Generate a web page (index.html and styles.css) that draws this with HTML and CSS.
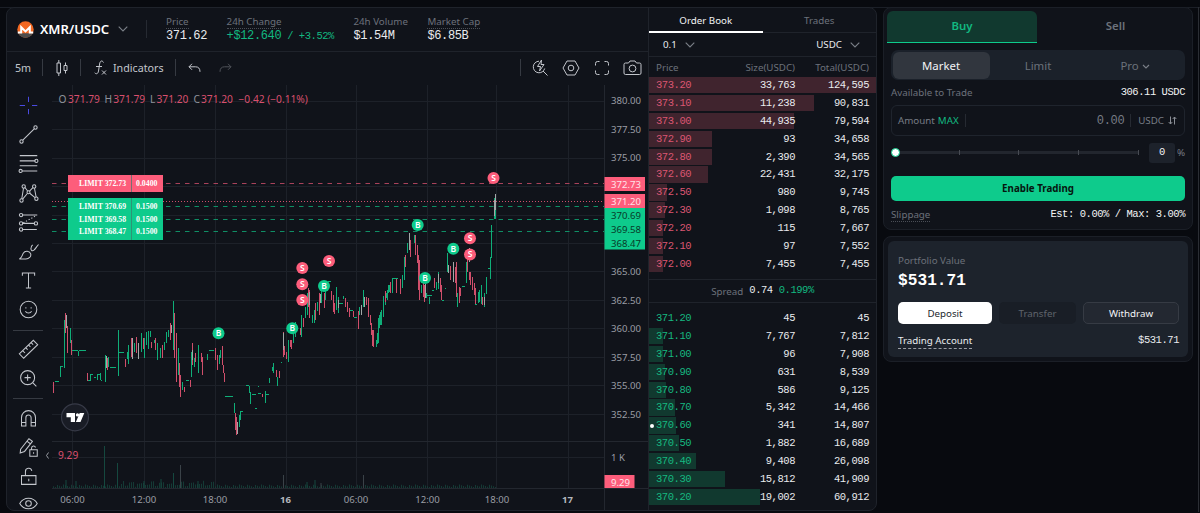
FILE: index.html
```
<!DOCTYPE html>
<html lang="en">
<head>
    <meta charset="UTF-8">
    <meta name="viewport" content="width=device-width, initial-scale=1.0">
    <title>XMR/USDC</title>
    <link rel="stylesheet" href="styles.css">
</head>
<body>

<div class="topline"></div>
<div class="page">
    <div class="market">
        <div class="market-left">
            <header class="pair-bar">
                <svg class="coin" width="17" height="17" viewBox="0 0 17 17">
                    <circle cx="8.5" cy="8.5" r="8.2" fill="#f26822"/>
                    <path d="M1.2 12.2a8.2 8.2 0 0 0 14.6 0z" fill="#4c4c4c"/>
                    <path d="M.8 11.6h3.4V6.2l4.3 4.2 4.3-4.2v5.4h3.4" fill="none" stroke="#fff" stroke-width="2"/>
                </svg>
                <span class="pair">XMR/USDC</span>
                <svg class="chev" width="10" height="6" viewBox="0 0 10 6"><path d="M.7.7 5 5 9.3.7"/></svg>
                <i class="pair-sep"></i>
                <div class="stat">
                    <span class="label dotted">Price</span>
                    <span class="value">371.62</span>
                </div>
                <div class="stat">
                    <span class="label dotted">24h Change</span>
                    <span class="value green">+$12.640<small> / +3.52%</small></span>
                </div>
                <div class="stat">
                    <span class="label">24h Volume</span>
                    <span class="value">$1.54M</span>
                </div>
                <div class="stat">
                    <span class="label dotted">Market Cap</span>
                    <span class="value">$6.85B</span>
                </div>
            </header>

            <div class="toolbar">
                <span class="interval">5m</span>
                <i class="sep"></i>
                <svg class="ic candle-ic" width="14" height="18" viewBox="0 0 14 18"><path d="M2 4h3.5v10H2zM3.8 1v3M3.8 14v3M9 6.500h3v5H9zM10.500 3.500v3M10.500 11.500v3"/></svg>
                <i class="sep"></i>
                <svg class="ic fx-ic" width="14" height="16" viewBox="0 0 14 16"><path d="M9.500 2.500C8-.2 6 1 5.600 4L4.500 11c-.4 2.800-2.200 3.500-3.800 1.800M2 6.500h6M8 10.500l4 4M12 10.500l-4 4"/></svg>
                <span class="indicators">Indicators</span>
                <i class="sep"></i>
                <svg class="ic undo" width="13" height="10" viewBox="0 0 13 10"><path d="M4 .8 1 3.800l3 3M1 3.800h6.500c3 0 4.500 1.700 4.500 5"/></svg>
                <svg class="ic redo" width="13" height="10" viewBox="0 0 13 10"><path d="M9 .8l3 3-3 3M12 3.800H5.500C2.500 3.800 1 5.500 1 8.800"/></svg>
                <i class="sep push"></i>
                <svg class="ic r1" width="18" height="18" viewBox="0 0 18 18"><path d="M8 2.200A5.800 5.800 0 1 0 13.700 9.500M12 12l4.500 4.500M10.500 1 6.500 7.500h3l-1 4.500 4.500-6.500H10z"/></svg>
                <svg class="ic r2" width="18" height="18" viewBox="0 0 18 18"><path d="M5 2h8l4 7-4 7H5L1 9z"/><circle cx="9" cy="9" r="2.800"/></svg>
                <svg class="ic r3" width="16" height="16" viewBox="0 0 16 16"><path d="M1.500 5.500V3.500a2 2 0 0 1 2-2h2M10.500 1.500h2a2 2 0 0 1 2 2v2M14.500 10.500v2a2 2 0 0 1-2 2h-2M5.500 14.500h-2a2 2 0 0 1-2-2v-2"/></svg>
                <svg class="ic r4" width="19" height="16" viewBox="0 0 19 16"><path d="M1 4.500a1.500 1.500 0 0 1 1.500-1.500h3l1.500-2h5l1.500 2h3A1.500 1.500 0 0 1 18 4.500v8.500a1.500 1.500 0 0 1-1.500 1.500h-14A1.500 1.500 0 0 1 1 13z"/><circle cx="9.500" cy="8.500" r="3.400"/></svg>
            </div>

            <div class="chart-row">
                <nav class="tools">
                    <svg class="cross" viewBox="0 0 24 24"><path d="M12 2v6M12 16v6M2 12h6M16 12h6"/></svg>
                    <svg viewBox="0 0 24 24"><circle cx="4" cy="20" r="1.900"/><circle cx="20" cy="4" r="1.900"/><path d="M5.500 18.500 18.500 5.500"/></svg>
                    <svg viewBox="0 0 24 24"><path d="M2 3h20M2 9h18M2 14.500h20M4.500 20.500H22"/><circle cx="21" cy="9" r="1.800"/><circle cx="3" cy="20.500" r="1.800"/></svg>
                    <svg viewBox="0 0 24 24"><circle cx="6.500" cy="4" r="1.900"/><circle cx="18.500" cy="4" r="1.900"/><circle cx="4" cy="20" r="1.900"/><circle cx="21" cy="18" r="1.900"/><circle cx="12" cy="10.500" r="1.700"/><path d="M6.300 6 4.300 18M18.800 6l1.900 10M8 5.200l3 4M17 5.200l-3.800 4M10.700 12 5.300 18.500M13.400 11.700l6 5"/></svg>
                    <svg viewBox="0 0 24 24"><path d="M5 3.500h17M5 13h14M5 20h16.500"/><path d="M6 12.500 20 4.500" stroke-dasharray="1.500 2"/><circle cx="3.500" cy="3.500" r="1.900"/><circle cx="3.500" cy="13" r="1.900"/><circle cx="3.500" cy="20" r="1.900"/><circle cx="20.500" cy="13" r="1.900"/></svg>
                    <svg viewBox="0 0 24 24"><path d="M1.500 20.500c3-1 3-4 4.500-6.500 2-3.500 7.500-3 8.500.8.800 3.200-2 5.700-5.500 5.700zM15 7.500c-.8 3 1 4.500 3.200 3C20.500 8.500 21 6.500 23.500 4M15 7.500c.3-1.500 1-2.300 1.800-3"/></svg>
                    <svg viewBox="0 0 24 24"><path d="M5 6.500V3.500h14V6.500M12 3.500v17M9 20.500h6"/></svg>
                    <svg viewBox="0 0 24 24"><circle cx="12" cy="12" r="9.500"/><path d="M8.500 14c1.500 2.700 5.500 2.700 7 0M9 9.300v1.500M15 9.300v1.500"/></svg>
                    <i></i>
                    <svg viewBox="0 0 24 24"><path d="M1.500 17 17.500 1.500 22.500 6.500 6.500 22zM5.500 13.500l2.500 2.500M9 10.200l2 2M12.200 7l2 2M15 4.200l2.300 2.300"/></svg>
                    <svg viewBox="0 0 24 24"><circle cx="11" cy="11" r="8"/><path d="M17 17l4 4M11 7.500v7M7.500 11h7"/></svg>
                    <i></i>
                    <svg viewBox="0 0 24 24"><path d="M4 20.500V11a8 8 0 0 1 16 0v9.500h-5v-9.500a3 3 0 0 0-6 0v9.500zM4 16.500h5M15 16.500h5"/></svg>
                    <svg viewBox="0 0 24 24"><path d="M3 14 12.500 2l4 3L7.500 16.500l-5 1.800zM10.500 5l4 3M13.500 14.500H22V22h-8.500zM15.500 14.500V12.500a2.300 2.300 0 0 1 4.500-.5M17.800 17.500v1.500"/></svg>
                    <svg viewBox="0 0 24 24"><path d="M4 11h16.500v10H4zM8.500 11V6.500a3.700 3.700 0 0 1 7.300-1M12.300 14.500v3"/></svg>
                    <svg viewBox="0 0 24 24"><path d="M2 12c4.500-8 15.500-8 20 0-4.500 8-15.500 8-20 0z"/><circle cx="12" cy="12" r="3.200"/></svg>
                </nav>

                <svg class="chart" width="603" height="426" viewBox="45 85 603 426">
                    <!-- grid -->
                    <path class="grid" d="M72.500 85V488M144.500 85V488M215.500 85V488M286.500 85V488M356.500 85V488M427.500 85V488M496.500 85V488M568.500 85V488"/>
                    <path class="grid" d="M52 101.500H604M52 129.500H604M52 158.500H604M52 186.500H604M52 215.500H604M52 243.500H604M52 271.500H604M52 300.500H604M52 328.500H604M52 357.500H604M52 385.500H604M52 414.500H604M52 457.500H604"/>
                    <path class="axis" d="M604.500 85V511M52 441.500H648M52 488.500H648"/>

                    <!-- volume -->
                    <path class="vol" id="volume"/>
                    <path class="vol" d="M104.500 446V488M117.500 463V488M66 480V488M76 481V488M144 481V488M161 479V488M173.500 473V488M198 481V488M307 482V488M315 480V488"/>
                    <path class="vol grey" d="M180.500 465V488M283.500 475V488M363.500 475V488M321 483V488"/>

                    <!-- candles -->
                    <path class="up" id="up"/>
                    <path class="down" id="down"/>
                    <path class="wick" id="wick"/>

                    <!-- order lines -->
                    <path class="dash down" d="M52 183.500H604"/>
                    <path class="dot down" d="M52 201.500H604"/>
                    <path class="dash up" d="M52 206.500H604M52 219.500H604M52 231.500H604"/>

                    <g class="limit">
                        <rect class="sell" x="68" y="175" width="95" height="17"/>
                        <rect class="buy" x="68" y="198" width="95" height="42"/>
                        <path d="M131.500 175V192M131.500 198V240"/>
                        <text x="79" y="186.300">LIMIT 372.73</text><text x="136" y="186.300">0.0400</text>
                        <text x="79" y="209">LIMIT 370.69</text><text x="136" y="209">0.1500</text>
                        <text x="79" y="222">LIMIT 369.58</text><text x="136" y="222">0.1500</text>
                        <text x="79" y="234">LIMIT 368.47</text><text x="136" y="234">0.1500</text>
                    </g>

                    <g class="marks" id="marks"></g>

                    <g class="prices">
                        <text x="611" y="104.300">380.00</text>
                        <text x="611" y="132.800">377.50</text>
                        <text x="611" y="161.300">375.00</text>
                        <text x="611" y="275">365.00</text>
                        <text x="611" y="303.500">362.50</text>
                        <text x="611" y="332">360.00</text>
                        <text x="611" y="360.500">357.50</text>
                        <text x="611" y="389">355.00</text>
                        <text x="611" y="417.500">352.50</text>
                        <text x="611" y="460.500">1 K</text>
                    </g>
                    <g class="tags">
                        <rect class="sell" x="604.500" y="177" width="40.500" height="14"/>
                        <rect class="sell" x="604.500" y="194" width="40.500" height="14.500"/>
                        <rect class="buy" x="604.500" y="208" width="40.500" height="41.500"/>
                        <rect class="sell" x="604.500" y="475" width="30" height="13"/>
                        <text x="611" y="188">372.73</text>
                        <text x="611" y="205">371.20</text>
                        <text class="dark" x="611" y="219">370.69</text>
                        <text class="dark" x="611" y="233">369.58</text>
                        <text class="dark" x="611" y="246.500">368.47</text>
                        <text x="611" y="485.500">9.29</text>
                    </g>
                    <g class="times">
                        <text x="72.500" y="503">06:00</text>
                        <text x="144" y="503">12:00</text>
                        <text x="215" y="503">18:00</text>
                        <text class="day" x="285.500" y="503">16</text>
                        <text x="356" y="503">06:00</text>
                        <text x="427.500" y="503">12:00</text>
                        <text x="497" y="503">18:00</text>
                        <text class="day" x="567.500" y="503">17</text>
                    </g>

                    <g class="legend">
                        <text x="58.500" y="103.300">O</text><text class="r" x="68" y="103.300">371.79</text>
                        <text x="104.500" y="103.300">H</text><text class="r" x="113.300" y="103.300">371.79</text>
                        <text x="150" y="103.300">L</text><text class="r" x="156.500" y="103.300">371.20</text>
                        <text x="193.500" y="103.300">C</text><text class="r" x="201" y="103.300">371.20</text>
                        <text class="r" x="238.500" y="103.300">−0.42 (−0.11%)</text>
                        <text class="r" x="58" y="458.500">9.29</text>
                    </g>
                    <path class="collapse" d="M48.500 452.500 46.500 455.500 48.500 458.500"/>

                    <circle class="tv" cx="75" cy="417.300" r="13.500"/>
                    <path class="tv-logo" d="M66.500 413h8.500v9h-4.200v-4.700h-4.300zM79.700 413h4.600l-3.800 9h-4.600z"/>
                    <circle class="tv-logo" cx="77.500" cy="414.900" r="1.700"/>
                </svg>
            </div>
        </div>

        <div class="book">
            <div class="book-tabs"><span class="on">Order Book</span><span>Trades</span></div>
            <div class="book-filter">
                <span>0.1</span><svg class="chev" width="10" height="6" viewBox="0 0 10 6"><path d="M.7.7 5 5 9.3.7"/></svg>
                <span class="unit">USDC</span><svg class="chev" width="10" height="6" viewBox="0 0 10 6"><path d="M.7.7 5 5 9.3.7"/></svg>
            </div>
            <div class="book-head"><span>Price</span><span>Size(USDC)</span><span>Total(USDC)</span></div>
            <div class="rows asks" id="asks"></div>
            <div class="spread"><span>Spread</span> <b>0.74</b> <b class="green">0.199%</b></div>
            <div class="rows bids" id="bids"></div>
        </div>
    </div>

    <aside class="side">
        <section class="trade">
            <div class="sides"><span class="on">Buy</span><span>Sell</span></div>
            <div class="types">
                <span class="on">Market</span>
                <span>Limit</span>
                <span>Pro <svg class="chev" width="8" height="6" viewBox="0 0 8 6"><path d="M1 1l3 3 3-3"/></svg></span>
            </div>
            <div class="line avail"><span>Available to Trade</span><b>306.11 USDC</b></div>
            <div class="amount">
                <span>Amount</span><span class="max">MAX</span><i></i>
                <b>0.00</b><i></i>
                <span>USDC</span>
                <svg width="9" height="9" viewBox="0 0 9 9"><path d="M2.500.5v7.500M.7 6l1.800 2 1.800-2M6.500 8.500V1M4.700 3l1.800-2 1.800 2"/></svg>
            </div>
            <div class="slider">
                <div class="track"><em></em><i></i><i></i><i></i><i></i></div>
                <b>0</b><span>%</span>
            </div>
            <button class="enable">Enable Trading</button>
            <div class="line slip"><span class="dotted">Slippage</span><b>Est: 0.00% / Max: 3.00%</b></div>
        </section>

        <section class="portfolio">
            <div class="inner">
                <div class="muted">Portfolio Value</div>
                <div class="total">$531.71</div>
                <div class="actions">
                    <button class="deposit">Deposit</button>
                    <button class="transfer">Transfer</button>
                    <button class="withdraw">Withdraw</button>
                </div>
                <div class="account"><span>Trading Account</span><b>$531.71</b></div>
            </div>
        </section>
    </aside>
</div>

<script src="app.js"></script>
</body>
</html>
```
FILE: styles.css
```
* {
    box-sizing: border-box;
}
body {
    margin: 0;
    height: 513px;
    overflow: hidden;
    background-color: #080a0f;
    color: #e9ebee;
    font-family: "Noto Sans", sans-serif;
    font-size: 9.75px;
}
b, .value, .total, .rows {
    font-family: "Liberation Mono", monospace;
    font-weight: normal;
}
b, .rows {
    font-size: 10.5px;
    letter-spacing: -.45px;
}
.green {
    color: #12b981;
}
.topline {
    height: 8px;
    border-bottom: 1px solid #1b1f27;
}
.page {
    display: flex;
    gap: 6px;
    width: 1199px;
    height: 505px;
    margin-top: -1px;
    padding-left: 6px;
    border-right: 1px solid #2b2e34;
}
.market {
    display: flex;
    width: 871px;
    height: 504px;
    border: 1px solid #1f232b;
    border-radius: 8px;
    background-color: #10131a;
    overflow: hidden;
}
.market-left {
    width: 642px;
    border-right: 1px solid #1f232b;
}
.chev {
    fill: none;
    stroke: #7b8088;
    stroke-width: 1.1;
}

/* pair header */
.pair-bar {
    display: flex;
    align-items: center;
    height: 44px;
    padding: 0 0 1px 10px;
    border-bottom: 1px solid #1f232b;
}
.pair {
    width: 70px;
    margin: 0 8px 0 6px;
    font-size: 13.1px;
    font-weight: 600;
    color: #fff;
}
.pair-sep {
    width: 1px;
    height: 18px;
    margin: 0 19px 0 18px;
    background-color: #262a32;
}
.stat {
    display: flex;
    flex-direction: column;
    margin-right: 19.5px;
    white-space: nowrap;
}
.label {
    align-self: flex-start;
    line-height: 13px;
    color: #6c717a;
}
.dotted {
    border-bottom: 1px dotted #4a4e56;
}
.label:not(.dotted) {
    border-bottom: 1px solid transparent;
}
.value {
    line-height: 14px;
    font-size: 12px;
    letter-spacing: -.36px;
}
.value small {
    font-size: 10.5px;
    letter-spacing: -.45px;
}

/* chart toolbar */
.toolbar {
    display: flex;
    align-items: center;
    height: 33px;
    padding: 0 6px 2px 8px;
    color: #c3c6cc;
    font-size: 10.7px;
}
.sep {
    width: 1px;
    height: 17px;
    background-color: #363a42;
}
.ic, .tools svg {
    fill: none;
    stroke: #c3c6cc;
    stroke-width: 1;
}
.interval {
    width: 27px;
}
.candle-ic {
    margin: 0 11px 0 12px;
}
.fx-ic {
    margin: 0 5px 0 13px;
}
.indicators {
    width: 62px;
}
.undo {
    margin-left: 12px;
}
.redo {
    margin-left: 18px;
    opacity: .35;
}
.push {
    margin-left: auto;
}
.r1 {
    margin-left: 10px;
}
.r2 {
    margin-left: 13px;
}
.r3 {
    margin-left: 14px;
}
.r4 {
    margin-left: 13px;
}

/* chart */
.chart-row {
    display: flex;
}
.tools {
    display: flex;
    flex-direction: column;
    align-items: center;
    width: 38px;
    height: 426px;
    padding: 6px 0 0 4px;
    overflow: hidden;
}
.tools svg {
    flex: none;
    width: 21px;
    height: 21px;
    margin: 4.1px 0;
    stroke-width: 1.2;
}
.tools .cross {
    stroke: #4a4ae0;
}
.tools i {
    flex: none;
    width: 30px;
    height: 1px;
    margin: 5px 0 4.500px;
    background-color: #363a42;
}
.tools svg:last-child {
    margin-top: 1.500px;
}
.chart {
    flex: none;
}
.chart path {
    fill: none;
}
.chart .grid {
    stroke: #1d2129;
}
.chart .axis {
    stroke: #23272f;
}
.up {
    stroke: #0fae78;
}
.down {
    stroke: #d04f6b;
}
.wick {
    stroke: #a3a8a8;
}
.dash {
    stroke-dasharray: 4.500 5;
    opacity: .8;
}
.dot {
    stroke-dasharray: 1 2;
}
.vol {
    stroke: #15483f;
}
#volume {
    opacity: .75;
}
.vol.grey {
    stroke: #3a4248;
}
.sell {
    fill: #fd5d7b;
}
.buy {
    fill: #0ecb8c;
}
.limit path {
    stroke: #3b7a6c;
    opacity: .7;
}
.limit text {
    font-family: "Liberation Serif", serif;
    font-size: 7.8px;
    font-weight: bold;
    fill: #fff;
}
.marks text {
    font-size: 8.5px;
    font-weight: 600;
    text-anchor: middle;
    fill: #fff;
}
.prices text, .times text, .tags text {
    font-size: 9.6px;
    fill: #9a9da4;
}
.tags text {
    fill: #ffe3e9;
}
.tags .dark {
    fill: #083a29;
}
.times text {
    text-anchor: middle;
}
.times .day {
    font-weight: bold;
    fill: #b4b7bd;
}
.legend text {
    font-size: 10.2px;
    fill: #8f939b;
}
.legend .r {
    fill: #d9506e;
}
.collapse {
    stroke: #9a9da4;
}
.tv {
    fill: #191c25;
    stroke: #373a47;
    stroke-width: 1.2;
}
.chart .tv-logo {
    fill: #fff;
}

/* order book */
.book {
    width: 228px;
}
.book-tabs {
    display: flex;
    height: 25px;
    border-bottom: 1px solid #1f232b;
    text-align: center;
    line-height: 25px;
    color: #6c717a;
}
.book-tabs span {
    flex: 1;
    height: 25px;
}
.book-tabs .on {
    color: #f2f3f5;
    border-bottom: 2px solid #fff;
}
.book-filter {
    display: flex;
    align-items: center;
    gap: 8px;
    height: 24px;
    padding: 0 16px 0 14px;
    border-bottom: 1px solid #1f232b;
}
.unit {
    margin-left: auto;
}
.book-head, .row {
    display: grid;
    grid-template-columns: 1fr 80px 74px;
    padding: 0 7px;
}
.book-head {
    height: 20px;
    line-height: 21px;
    color: #6c717a;
}
.book-head span:not(:first-child), .row span:not(.price) {
    text-align: right;
}
.row {
    position: relative;
    height: 17.9px;
    line-height: 16px;
}
.row span {
    position: relative;
}
.row .bar {
    position: absolute;
    left: 0;
    top: 0;
    height: 16.2px;
}
.asks .bar {
    background-color: #40242e;
}
.asks .price {
    color: #dc5672;
}
.bids .bar {
    background-color: #11392f;
}
.bids .price {
    color: #16b880;
}
.row .own {
    position: absolute;
    left: 1px;
    top: 6.500px;
    width: 4px;
    height: 4px;
    border-radius: 50%;
    background-color: #fff;
}
.asks {
    height: 202px;
}
.spread {
    display: flex;
    align-items: center;
    justify-content: center;
    gap: 6px;
    height: 24px;
    border: solid #1f232b;
    border-width: 1px 0;
    color: #6c717a;
}
.spread b {
    color: #e9ebee;
    margin-top: -2px;
}
.spread .green {
    color: #12b981;
}
.bids {
    padding-top: 7px;
}

/* trade form */
.side {
    width: 310px;
}
.trade {
    height: 223px;
    padding: 3px 7px;
    border: 1px solid #1b1f27;
    border-radius: 8px;
    background-color: #10131a;
}
.sides {
    display: flex;
    height: 32px;
    margin: 0 -5px;
    text-align: center;
    line-height: 30px;
    font-size: 11.4px;
    font-weight: 600;
    color: #6c717a;
}
.sides span {
    flex: none;
    width: 150px;
}
.sides .on {
    color: #12b981;
    border-bottom: 1.500px solid #0ecb8c;
    border-radius: 6px 6px 0 0;
    background-color: #11392f;
}
.sides .on + span {
    width: 157px;
}
.sides {
    padding-left: 1px;
}
.types {
    display: flex;
    height: 30px;
    margin-top: 7px;
    padding: 1.500px;
    border-radius: 7px;
    background-color: #1b212a;
    text-align: center;
    line-height: 27px;
    font-size: 11.4px;
    color: #6c717a;
}
.types span {
    flex: 1;
}
.types .on {
    border-radius: 6px;
    background-color: #31363e;
    color: #f2f3f5;
}
.line {
    display: flex;
    justify-content: space-between;
    align-items: center;
    height: 25px;
    color: #6c717a;
}
.line b {
    margin-top: -2px;
    color: #f2f3f5;
}
.amount {
    display: flex;
    align-items: center;
    height: 31px;
    padding: 0 7px 0 6px;
    border: 1px solid #1f242d;
    border-radius: 6px;
    color: #777c85;
}
.amount .max {
    margin: 0 6px 0 3px;
    color: #12b981;
}
.amount i {
    width: 1px;
    height: 13px;
    background-color: #262a32;
}
.amount b {
    margin: 0 6px 0 auto;
    font-size: 12px;
    letter-spacing: -.36px;
}
.amount i + span {
    margin: 0 4px 0 7px;
}
.amount svg {
    fill: none;
    stroke: #8a8e96;
}
.slider {
    display: flex;
    align-items: center;
    height: 33px;
    color: #777c85;
}
.track {
    display: flex;
    justify-content: space-between;
    align-items: center;
    width: 248px;
    height: 3px;
    background-color: #22262e;
}
.track em {
    width: 9px;
    height: 9px;
    border: 1px solid #0ecb8c;
    border-radius: 50%;
    background-color: #fff;
}
.track i {
    width: 1px;
    height: 5px;
    background-color: #474b53;
}
.slider b {
    width: 26px;
    height: 20px;
    margin: 0 2px 0 10px;
    border-radius: 3px;
    background-color: #1d222b;
    text-align: center;
    line-height: 19px;
    color: #f2f3f5;
}
button {
    padding: 0;
    border: none;
    border-radius: 5px;
    font-family: "Noto Sans", sans-serif;
    font-size: 9.75px;
    cursor: pointer;
}
.enable {
    display: block;
    width: 100%;
    height: 25px;
    margin-top: 7px;
    background-color: #0ecb8c;
    color: #06160f;
    font-weight: bold;
}
.slip {
    height: 28px;
}

/* portfolio */
.portfolio {
    height: 126px;
    margin-top: 6px;
    padding: 4px;
    border: 1px solid #1b1f27;
    border-radius: 8px;
    background-color: #10131a;
}
.inner {
    height: 116px;
    padding: 13px 9px 0 10px;
    border-radius: 6px;
    background-color: #1d232c;
}
.muted {
    line-height: 14px;
    color: #6b7079;
}
.total {
    font-size: 16.2px;
    font-weight: bold;
    line-height: 26px;
    color: #fff;
}
.actions {
    display: flex;
    justify-content: space-between;
    margin-top: 8px;
}
.actions button {
    height: 22px;
}
.deposit {
    width: 94px;
    background-color: #fff;
    color: #23272e;
}
.transfer {
    width: 77px;
    background-color: #191e26;
    color: #5f646c;
}
.actions .withdraw {
    width: 96px;
    border: 1px solid #363b44;
    background-color: #232831;
    color: #f2f3f5;
}
.account {
    display: flex;
    justify-content: space-between;
    margin-top: 10px;
    line-height: 14px;
}
.account b {
    margin-top: -1px;
}
.account span {
    border-bottom: 1px dashed #9a9da4;
}
```
FILE: app.js
```
const maxTotal = 124595;

const asks = [
    ['373.20', '33,763', '124,595'], ['373.10', '11,238', '90,831'], ['373.00', '44,935', '79,594'],
    ['372.90', '93', '34,658'], ['372.80', '2,390', '34,565'], ['372.60', '22,431', '32,175'],
    ['372.50', '980', '9,745'], ['372.30', '1,098', '8,765'], ['372.20', '115', '7,667'],
    ['372.10', '97', '7,552'], ['372.00', '7,455', '7,455']
];
const bids = [
    ['371.20', '45', '45'], ['371.10', '7,767', '7,812'], ['371.00', '96', '7,908'],
    ['370.90', '631', '8,539'], ['370.80', '586', '9,125'], ['370.70', '5,342', '14,466'],
    ['370.60', '341', '14,807'], ['370.50', '1,882', '16,689'], ['370.40', '9,408', '26,098'],
    ['370.30', '15,812', '41,909'], ['370.20', '19,002', '60,912']
];

function fillBook(id, rows) {
    document.getElementById(id).innerHTML = rows.map(([price, size, total]) => {
        const value = parseInt(total.replace(',', ''));
        // tiny totals get no bar, small ones keep a visible stub
        const width = value < 100 ? 0 : Math.max(value / maxTotal * 100, 6.2);
        const own = price === '370.60' ? '<i class="own"></i>' : '';
        return `<div class="row"><div class="bar" style="width: ${width.toFixed(1)}%"></div>${own}
            <span class="price">${price}</span><span>${size}</span><span>${total}</span></div>`;
    }).join('');
}
fillBook('asks', asks);
fillBook('bids', bids);

// x, high, low
const up = `60 366 377,64 320 368,70 328 343,78 351 356,90 375 380,97 375 380,100 373 380,105 355 382,108 357 367,
118 330 376,127 352 359,128 345 364,134 343 352,141 333 352,144 338 358,146 332 345,148 331 349,150 331 337,154 340 343,
157 343 360,160 348 358,164 342 350,166 332 343,168 330 337,173 301 350,178 348 375,182 382 390,191 352 377,194 358 367,
198 345 373,207 354 360,219 355 364,220 350 358,234 403 413,239 415 427,240 412 420,249 386 393,250 392 404,265 391 403,
269 378 383,272 367 371,273 363 373,277 377 386,288 340 362,293 332 343,295 322 337,301 315 337,305 307 318,307 293 315,
312 315 323,314 310 323,317 302 311,321 290 303,325 290 300,336 287 310,338 297 313,343 296 299,359 307 315,363 290 307,
376 344 347,377 333 344,378 318 335,380 312 325,383 302 312,385 297 305,387 290 300,389 285 292,376 340 344,378 328 343,
379 315 328,381 310 325,383 296 317,386 293 298,388 285 293,392 278 293,402 275 288,404 257 280,407 243 253,414 235 243,
421 285 293,426 293 298,429 297 304,436 282 290,438 272 289,447 253 272,457 293 307,466 262 283,478 292 303,479 290 302,
481 285 304,484 293 307,486 277 294,490 257 279,491 225 258,494 198 219,495 202 219`;
const down = `53 382 393,65 313 333,67 326 353,71 340 355,87 373 381,107 358 370,125 359 367,131 338 357,136 337 353,
143 338 349,151 342 348,155 338 350,162 345 358,170 323 340,174 313 358,176 333 382,179 363 387,180 375 397,184 387 392,
190 380 387,192 343 365,195 353 362,201 353 362,202 357 375,215 348 360,217 355 370,222 346 365,223 365 373,224 373 382,
235 413 430,236 417 435,262 394 397,276 370 377,279 371 378,283 332 357,284 346 355,286 352 359,290 340 347,291 340 349,
300 328 335,303 318 327,308 288 307,309 290 318,315 303 320,319 293 315,324 293 308,331 291 300,333 295 312,334 303 314,
345 298 307,347 302 312,349 308 317,353 311 317,358 311 329,366 297 305,368 298 317,370 315 325,371 323 335,373 330 347,
371 323 333,372 330 346,385 291 302,390 282 293,396 279 293,400 279 294,405 255 267,410 240 257,415 235 255,417 245 263,
418 255 290,419 260 300,423 283 297,424 285 302,434 278 288,440 278 292,441 285 300,450 266 280,455 267 283,456 262 297,
459 287 303,460 288 296,467 250 272,469 272 280,470 272 285,472 277 290,474 283 295,475 288 304,482 297 305`;
const wick = `66 315 328,132 338 359,138 343 359,106 356 368,171 325 333,192 350 360,237 422 434,283 333 350,309 292 305,
320 294 303,361 305 315,364 297 307,409 233 250,448 265 273,453 262 282,469 248 262,495 194 210,494 200 216,484 297 305,
425 284 298,438 274 283,338 300 308`;
// x, y, width
const ticks = `55 381 4,60 366 3,72 350 6,79 350 7,88 380 3,90 374 3,94 377 2,97 374 3,101 380 1,110 367 6,119 352 5,
186 380 3,209 350 5,225 396 8,240 411 3,246 385 3,252 394 4,255 408 2,258 386 1,258 393 3,266 394 3,281 362 1,328 281 3,
339 303 4,350 310 3,354 317 3,393 278 5,427 295 5,432 290 2,442 300 2,445 288 1,462 286 3,475 304 2,488 268 3`;

function bars(list) {
    return list.split(',').map(item => {
        const [x, y1, y2] = item.trim().split(' ');
        return `M${+x + 0.5} ${y1}V${y2}`;
    }).join('');
}
const dashes = ticks.split(',').map(item => {
    const [x, y, w] = item.trim().split(' ');
    return `M${x} ${+y + 0.5}h${w}`;
}).join('');
document.getElementById('up').setAttribute('d', bars(up) + dashes);
document.getElementById('down').setAttribute('d', bars(down));
document.getElementById('wick').setAttribute('d', bars(wick));

let volume = '';
for (let x = 53; x < 496; x += 2) {
    const h = 1 + (x * 37 % 11) / 4 + (x > 120 && x < 215 ? x * 13 % 5 : 0);
    volume += `M${x + 0.5} ${488 - h}V488`;
}
document.getElementById('volume').setAttribute('d', volume);

const marks = [
    ['B', 218.5, 333.3], ['B', 292.3, 328.3], ['S', 302.3, 268], ['S', 302.3, 284.3], ['S', 302.3, 300],
    ['S', 329, 261], ['B', 324, 286], ['B', 417.7, 225], ['B', 425, 278], ['B', 453.3, 248.8],
    ['S', 470, 238.2], ['S', 470, 254.5], ['S', 493.5, 178]
];
document.getElementById('marks').innerHTML = marks.map(([side, x, y]) =>
    `<circle class="${side === 'B' ? 'buy' : 'sell'}" cx="${x}" cy="${y}" r="6"/><text x="${x}" y="${y + 2.8}">${side}</text>`
).join('');
```
